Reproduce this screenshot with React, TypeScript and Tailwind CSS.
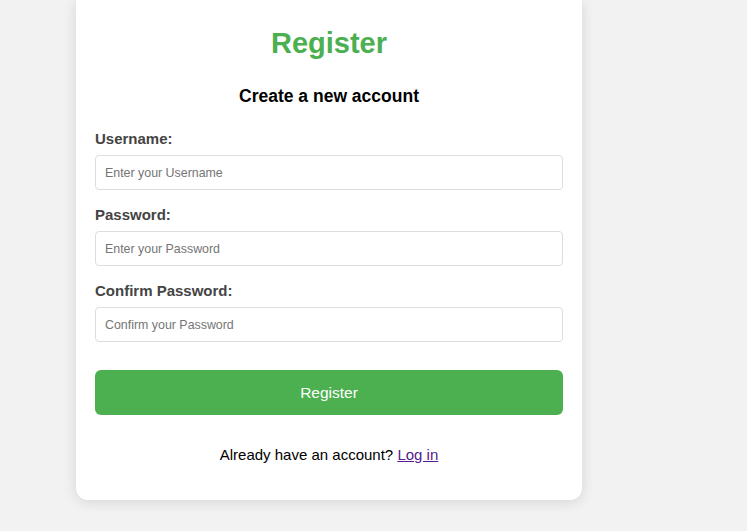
import { useState } from "react";

export default function App() {
  const [form, setForm] = useState({ username: "", password: "", confirm: "" });

  // campos do formulário
  const fields = [
    { key: "username", label: "Username:", type: "text", placeholder: "Enter your Username" },
    { key: "password", label: "Password:", type: "password", placeholder: "Enter your Password" },
    { key: "confirm", label: "Confirm Password:", type: "password", placeholder: "Confirm your Password" },
  ] as const;

  return (
    <div className="min-h-[531px] bg-[#f2f2f2] pl-[76px] font-['Liberation_Sans',Arial,sans-serif]">
      <div className="w-[506px] rounded-b-xl bg-white px-[19px] pb-[36px] shadow-[0_2px_14px_rgba(0,0,0,0.12)]">
        <h2 className="pt-[27px] text-center text-[29px] font-bold leading-[33px] text-[#4caf50]">
          Register
        </h2>
        <h3 className="mt-[26px] text-center text-[17.5px] font-bold leading-[20px] text-black">
          Create a new account
        </h3>

        <form className="mt-[24px]" onSubmit={e => e.preventDefault()}>
          {fields.map((f, i) => (
            <div key={f.key} className={i > 0 ? "mt-[16px]" : ""}>
              <label className="block text-[15px] font-bold leading-[18px] text-[#444]">
                {f.label}
              </label>
              <input
                type={f.type}
                value={form[f.key]}
                onChange={e => setForm({ ...form, [f.key]: e.target.value })}
                placeholder={f.placeholder}
                className="mt-[7px] block h-[35px] w-full rounded-[4px] border border-[#dddddd] px-[9px] text-[12.4px] text-black outline-none placeholder:text-[#757575]"
              />
            </div>
          ))}

          <button
            type="submit"
            className="mt-[28px] block h-[45px] w-full rounded-[6px] bg-[#4caf50] text-[15.5px] text-white"
          >
            Register
          </button>
        </form>

        <p className="mt-[31px] text-center text-[15px] leading-[18px] text-black">
          Already have an account?{" "}
          <a href="#" className="text-[#551a8b] underline">
            Log in
          </a>
        </p>
      </div>
    </div>
  );
}
